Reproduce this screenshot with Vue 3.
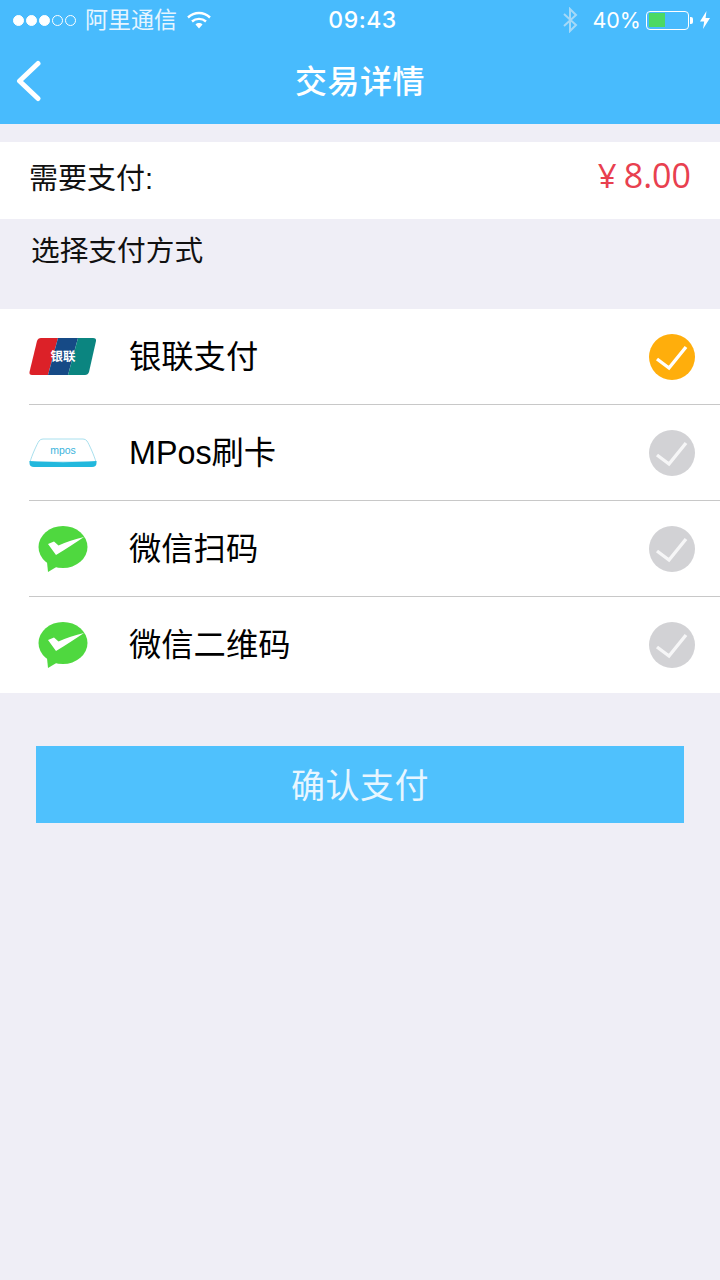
<script setup>
const methods = [
  { name: '银联支付', icon: 'union', checked: true },
  { name: 'MPos刷卡', icon: 'mpos', checked: false },
  { name: '微信扫码', icon: 'wechat', checked: false },
  { name: '微信二维码', icon: 'wechat', checked: false },
]
</script>

<template>
  <div class="page">
    <header class="top">
      <div class="status">
        <div class="status-left">
          <span class="signal">
            <i class="dot on"></i><i class="dot on"></i><i class="dot on"></i><i class="dot"></i><i class="dot"></i>
          </span>
          <span class="carrier">阿里通信</span>
          <svg class="wifi" width="26" height="20" viewBox="0 0 26 20">
            <path d="M2 7.5C8.5 1.5 17.5 1.5 24 7.5" fill="none" stroke="#fff" stroke-width="2.4" />
            <path d="M6 11.5C10 8 16 8 20 11.5" fill="none" stroke="#fff" stroke-width="2.4" />
            <path d="M9.5 14.5C11.5 12.6 14.5 12.6 16.5 14.5L13 18.5Z" fill="#fff" />
          </svg>
        </div>
        <div class="time">09:43</div>
        <div class="status-right">
          <svg class="bt" width="16" height="26" viewBox="0 0 16 26">
            <path d="M2 7L14 18L8 24V2L14 8L2 19" fill="none" stroke="#a5d9f7" stroke-width="2" />
          </svg>
          <span class="percent">40%</span>
          <span class="battery"><span class="battery-fill"></span></span>
          <span class="battery-tip"></span>
          <svg class="bolt" width="12" height="20" viewBox="0 0 12 20">
            <path d="M7.5 1L1 11.5H5.2L4 19L11 8H6.6Z" fill="#fff" />
          </svg>
        </div>
      </div>
      <div class="nav">
        <svg class="back" width="28" height="42" viewBox="0 0 28 42">
          <path d="M23 3.5L4.5 21L23 38.5" fill="none" stroke="#fff" stroke-width="5" stroke-linecap="round" stroke-linejoin="round" />
        </svg>
        <h1 class="title">交易详情</h1>
      </div>
    </header>

    <section class="amount">
      <span class="amount-label">需要支付:</span>
      <span class="amount-value"><span class="yen">¥</span><span>8.00</span></span>
    </section>

    <div class="section-title">选择支付方式</div>

    <ul class="list">
      <li v-for="m in methods" :key="m.name" class="row">
        <div class="row-inner">
          <span class="icon">
            <svg v-if="m.icon === 'union'" width="68" height="38" viewBox="0 0 68 38">
              <path d="M12 0H29L19 37H3Q0 37 .5 34L8 3Q9 0 12 0Z" fill="#dc2128" />
              <path d="M29 0H49L39 37H19Z" fill="#164a86" />
              <path d="M49 0H64Q67.500 0 67 3L60 34Q59 37 56 37H39Z" fill="#0b8580" />
              <text x="34" y="23" text-anchor="middle" class="union-text">银联</text>
            </svg>
            <svg v-else-if="m.icon === 'mpos'" width="68" height="30" viewBox="0 0 68 30">
              <path d="M1 24C3 17 8 6 10 3Q11.500 1 14 1H54Q56.500 1 58 3C60 6 65 17 67 24Z" fill="#fff" stroke="#a9e0ee" stroke-width="1" />
              <path d="M.5 23C20 24.500 48 24.500 67.500 23V25Q67.500 29 63 29H5Q.5 29 .5 25Z" fill="#22b8dd" />
              <text x="34" y="16" text-anchor="middle" class="mpos-text">mpos</text>
            </svg>
            <svg v-else width="50" height="48" viewBox="0 0 50 48">
              <path d="M9 37L10 47L20 41Z" fill="#4fd83f" />
              <ellipse cx="25" cy="22" rx="24.500" ry="21" fill="#4fd83f" />
              <path d="M10 19L16 16.500L20.500 20.500C28 17 37 14 46 12C37 18 28 24 18 30Z" fill="#fff" />
            </svg>
          </span>
          <span class="name">{{ m.name }}</span>
          <svg class="check" width="46" height="46" viewBox="0 0 46 46">
            <circle cx="23" cy="23" r="23" :fill="m.checked ? '#ffae0c' : '#d2d2d5'" />
            <path d="M8 25L20 34L37 13" fill="none" stroke="#fff" stroke-width="3.400" :opacity="m.checked ? 1 : 0.8" />
          </svg>
        </div>
      </li>
    </ul>

    <div class="action">
      <button class="pay" type="button">确认支付</button>
    </div>
  </div>
</template>

<style scoped>
.page {
  height: 1280px;
  background: #efeef6;
  font-family: "Liberation Sans", "Noto Sans CJK SC", sans-serif;
  color: #111;
  overflow: hidden;
}

.top {
  height: 124px;
  background: #48bbfd;
  color: #fff;
}

.status {
  height: 40px;
  display: flex;
  align-items: center;
  justify-content: space-between;
  padding: 0 9px 0 13px;
  position: relative;
}

.status-left,
.status-right {
  display: flex;
  align-items: center;
}

.signal {
  display: flex;
  gap: 2px;
}

.dot {
  width: 11px;
  height: 11px;
  border: 1px solid #fff;
  border-radius: 50%;
  box-sizing: border-box;
}

.dot.on {
  background: #fff;
}

.carrier {
  margin-left: 9px;
  font-size: 23px;
  color: #e6f5ff;
  padding-bottom: 4px;
}

.wifi {
  margin-left: 9px;
}

.time {
  position: absolute;
  left: 0;
  right: 0;
  text-align: center;
  font-size: 23px;
  font-family: Inter, "Liberation Sans", sans-serif;
  font-weight: 500;
  letter-spacing: 0.5px;
  padding-left: 5px;
}

.bt {
  margin-right: 14px;
}

.percent {
  font-size: 21.5px;
  font-family: Inter, "Liberation Sans", sans-serif;
  margin-right: 5px;
}

.battery {
  width: 43px;
  height: 19px;
  border: 1.5px solid #fff;
  border-radius: 4px;
  box-sizing: border-box;
  padding: 1.5px;
  display: block;
}

.battery-fill {
  display: block;
  width: 16px;
  height: 100%;
  background: #4cd964;
}

.battery-tip {
  width: 3px;
  height: 7px;
  margin-left: 1px;
  background: #fff;
  border-radius: 0 2px 2px 0;
}

.bolt {
  margin-left: 6px;
}

.nav {
  height: 84px;
  display: flex;
  align-items: center;
  justify-content: center;
  position: relative;
}

.back {
  position: absolute;
  left: 15px;
  top: 20px;
}

.title {
  margin: 0 0 6px;
  font-size: 32px;
  font-weight: 500;
  letter-spacing: 0.5px;
}

.amount {
  margin-top: 18px;
  height: 77px;
  background: #fff;
  display: flex;
  align-items: center;
  justify-content: space-between;
  padding: 0 29px;
  font-size: 29px;
}

.amount-label {
  font-size: 29px;
  padding-bottom: 9px;
}

.amount-value {
  font-size: 34px;
  color: #e8404f;
  font-family: "Open Sans", "Liberation Sans", sans-serif;
  padding-bottom: 12px;
}

.yen {
  font-size: 33px;
  margin-right: 7px;
}

.section-title {
  height: 90px;
  box-sizing: border-box;
  padding: 14px 31px 0;
  font-size: 28.7px;
  line-height: 36px;
}

.list {
  margin: 0;
  padding: 0;
  list-style: none;
  background: #fff;
}

.row {
  height: 96px;
  padding-left: 29px;
}

.row-inner {
  height: 96px;
  box-sizing: border-box;
  display: flex;
  align-items: center;
  padding-right: 25px;
  border-bottom: 1px solid #c8c8c8;
}

.row:last-child .row-inner {
  border-bottom: 0;
}

.icon {
  width: 68px;
  height: 50px;
  display: flex;
  align-items: center;
  justify-content: center;
  flex: none;
}

.union-text {
  font-size: 12.5px;
  font-weight: 700;
  fill: #fff;
}

.mpos-text {
  font-size: 10.5px;
  fill: #3bb4dc;
}

.name {
  flex: 1;
  margin-left: 32px;
  font-size: 32.3px;
  color: #000;
  padding-bottom: 6px;
}

.check {
  flex: none;
}

.action {
  padding: 53px 36px 0 36px;
}

.pay {
  display: block;
  width: 100%;
  height: 77px;
  padding: 0 0 2px;
  border: 0;
  background: #4fc1fd;
  color: #e8f6ff;
  font-family: inherit;
  font-size: 34px;
  letter-spacing: 0.5px;
}
</style>
